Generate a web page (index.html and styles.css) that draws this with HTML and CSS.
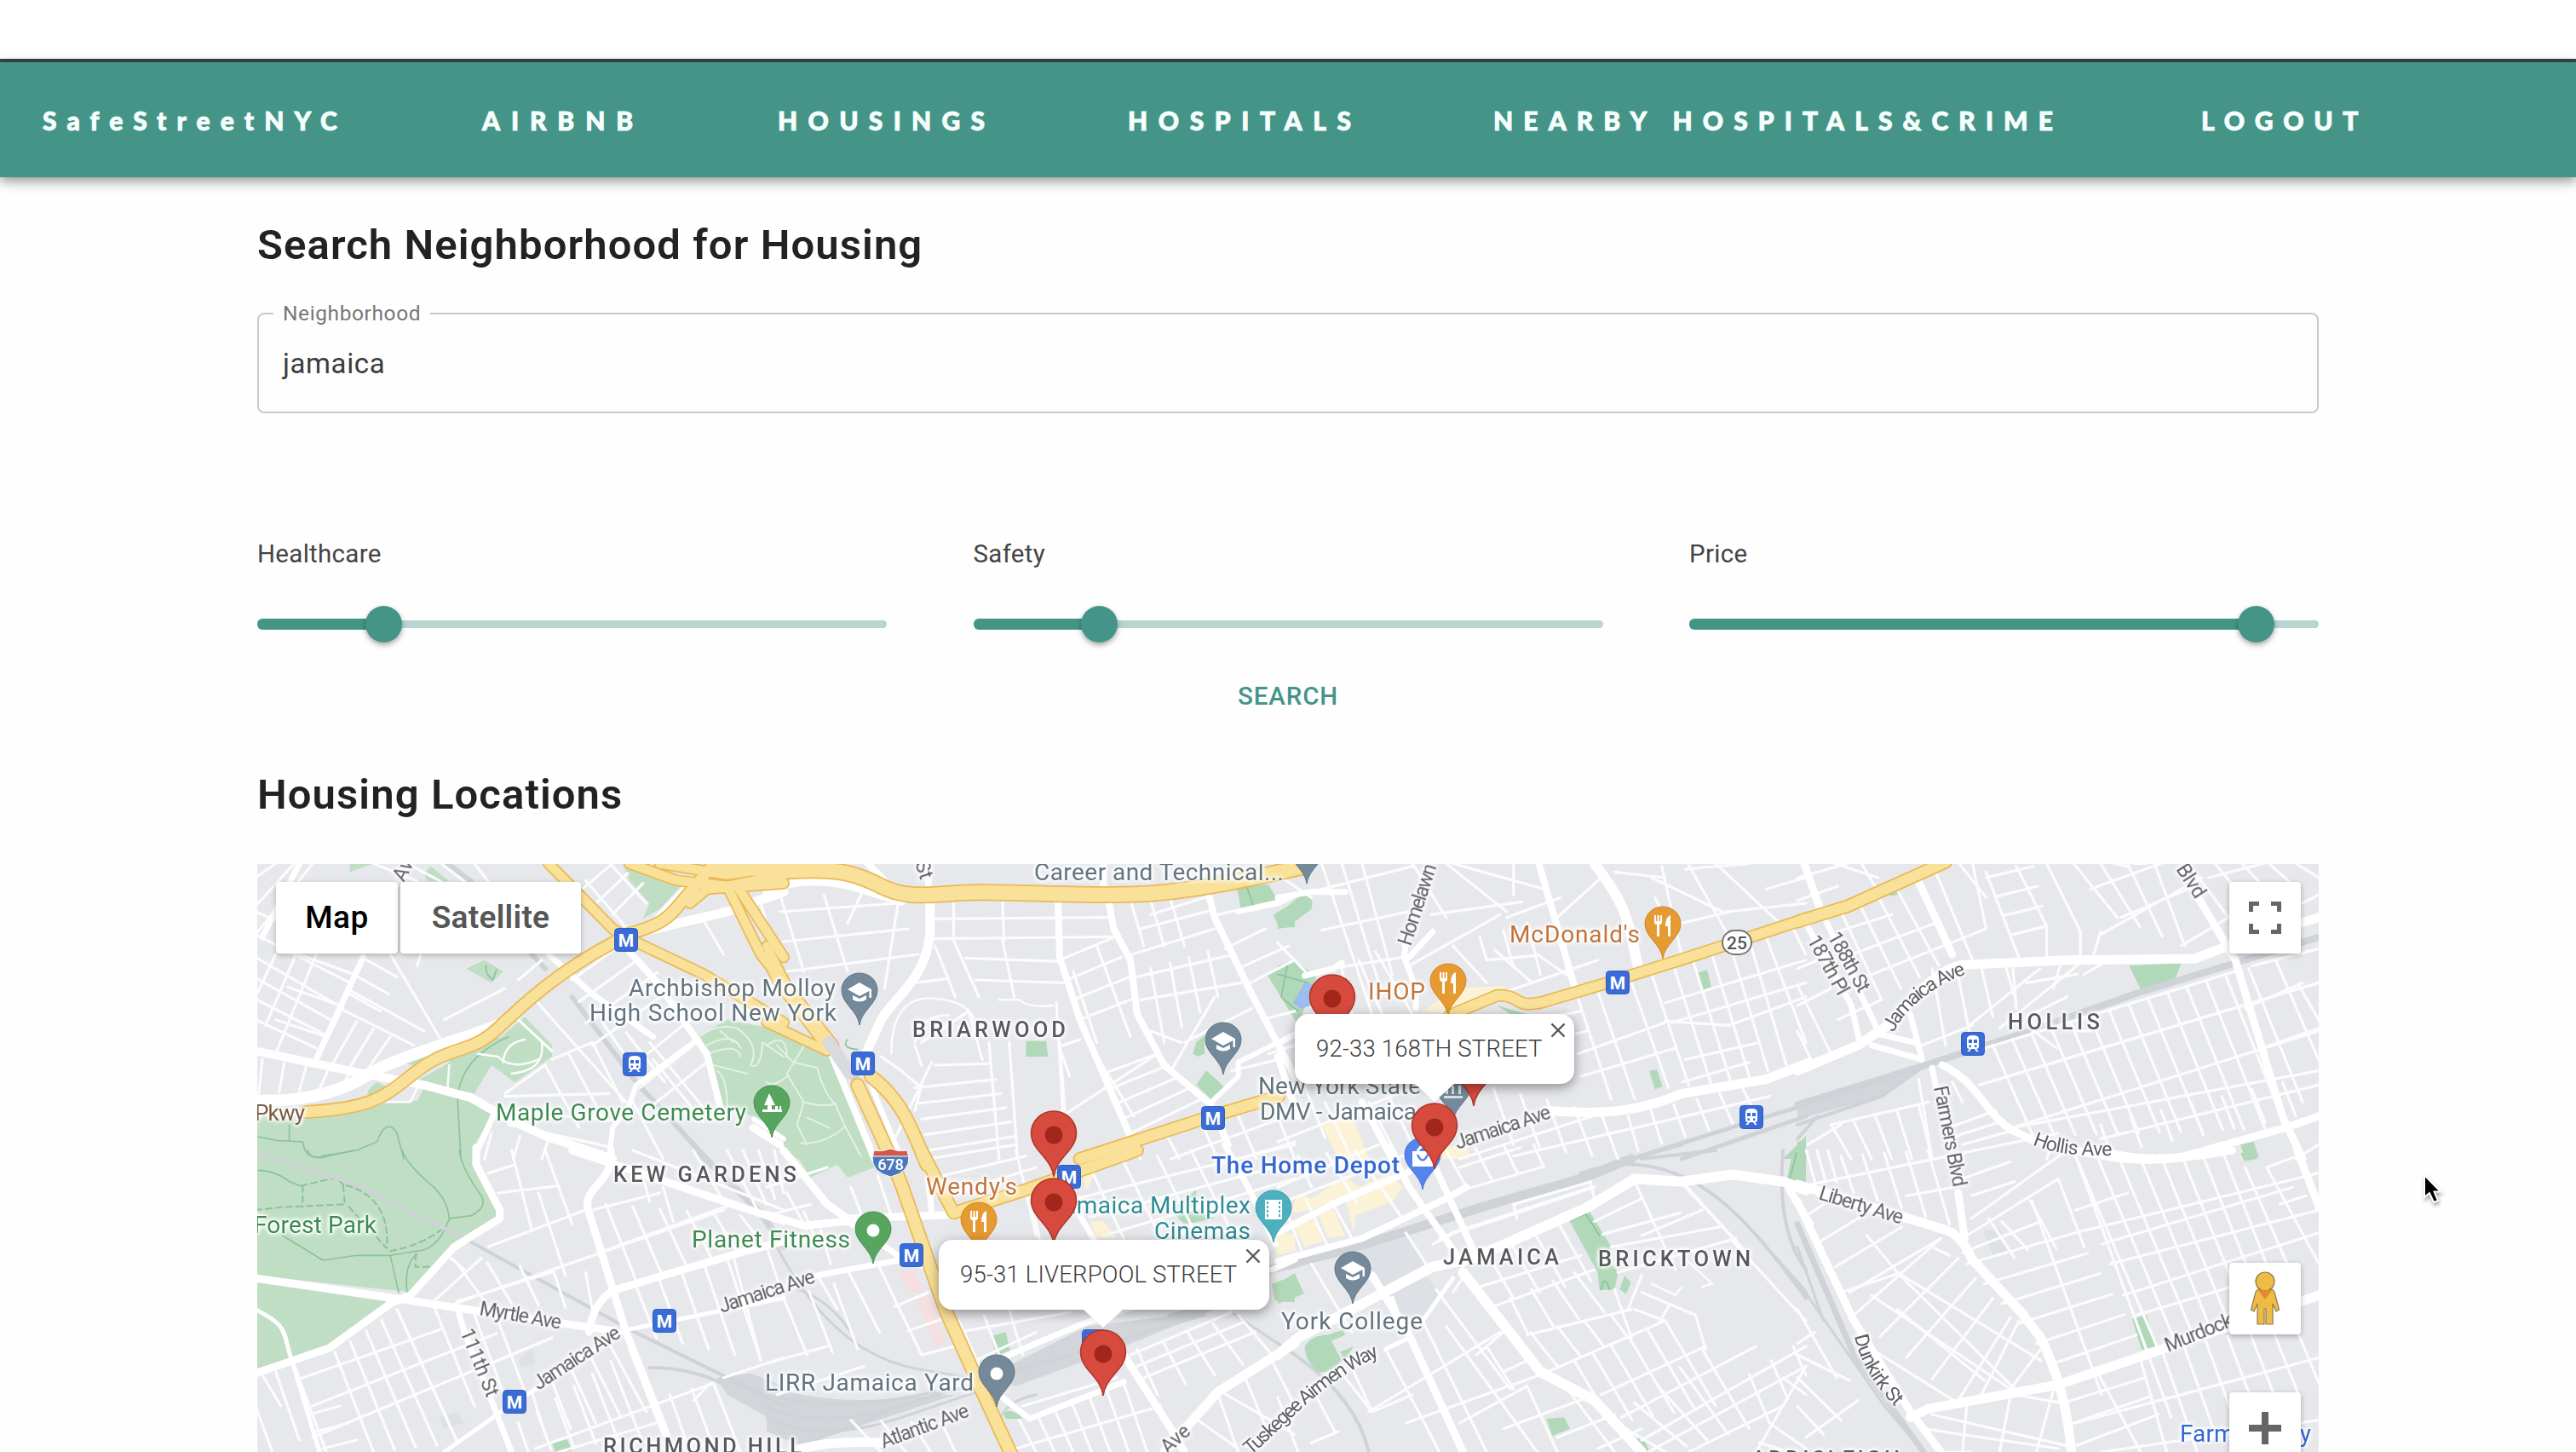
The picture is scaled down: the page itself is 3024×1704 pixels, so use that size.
FILE: index.html
```html
<!DOCTYPE html>
<html lang="en">
<head>
<meta charset="utf-8">
<title>SafeStreetNYC</title>
<link rel="stylesheet" href="styles.css">
</head>
<body>
<div class="topstrip"></div>
<nav class="navbar">
  <a class="brand">SafeStreetNYC</a>
  <a class="n-air">AIRBNB</a>
  <a class="n-hou">HOUSINGS</a>
  <a class="n-hos">HOSPITALS</a>
  <a class="n-near">NEARBY HOSPITALS&amp;CRIME</a>
  <a class="n-out">LOGOUT</a>
</nav>
<main class="container">
  <h2 class="title">Search Neighborhood for Housing</h2>
  <fieldset class="field">
    <legend>Neighborhood</legend>
    <div class="value">jamaica</div>
  </fieldset>
  <div class="sliders">
    <div class="slider"><label>Healthcare</label><div class="rail"><div class="fill" style="width:20%"></div><div class="thumb" style="left:20%"></div></div></div>
    <div class="slider"><label>Safety</label><div class="rail"><div class="fill" style="width:20%"></div><div class="thumb" style="left:20%"></div></div></div>
    <div class="slider"><label>Price</label><div class="rail"><div class="fill" style="width:90%"></div><div class="thumb" style="left:90%"></div></div></div>
  </div>
  <div class="actions"><button class="search">SEARCH</button></div>
  <h2 class="title locations">Housing Locations</h2>
  <section class="map">
    <svg class="canvas" viewBox="302 1014 2420 690" width="2420" height="690">
      <defs>
        <path id="drop" d="M0 61C-2 44-21 36-21 20A21 20 0 0 1 21 20C21 36 2 44 0 61Z"/>
        <g id="red"><path d="M0 77C-3 54-26.500 46-26.500 26A26.500 26 0 0 1 26.500 26C26.500 46 3 54 0 77Z" fill="#d64b3d" stroke="#b0352b" stroke-width="1.500"/><circle cy="28" r="10.500" fill="#a3261c"/></g>
        <g id="edu"><use href="#drop" fill="#74899a" stroke="#5f7485"/><path d="M-14 19L0 11L14 19V29H11.500V21L0 27ZM-8 26L0 30L8 26V31Q0 36-8 31Z" fill="#fff"/></g>
        <g id="food"><use href="#drop" fill="#e69a32" stroke="#d08622"/><path d="M-10 10V18Q-10 21-7 21V35H-4V21Q-1 21-1 18V10H-3V17H-4.500V10H-6.500V17H-8V10ZM9 10Q3 12 3 23H6V35H9Z" fill="#fff"/></g>
        <g id="dotg"><use href="#drop" fill="#57a55e" stroke="#45924d"/><circle cy="22" r="7.500" fill="#fff"/></g>
        <g id="dots"><use href="#drop" fill="#74899a" stroke="#5f7485"/><circle cy="22" r="7.500" fill="#fff"/></g>
        <g id="tree"><use href="#drop" fill="#57a55e" stroke="#45924d"/><path d="M-3 9L4 23H0V28H12V31H-11V28H-5V23H-9ZM4 24h3v4H4ZM9 24h2v4H9Z" fill="#fff"/></g>
        <g id="film"><use href="#drop" fill="#4cb0bf" stroke="#3a9dac"/><path fill="#fff" fill-rule="evenodd" d="M-10 11H10V34H-10ZM-8 13v3h2v-3ZM-8 18v3h2v-3ZM-8 23v3h2v-3ZM-8 28v3h2v-3ZM6 13v3h2v-3ZM6 18v3h2v-3ZM6 23v3h2v-3ZM6 28v3h2v-3Z"/></g>
        <g id="bag"><use href="#drop" fill="#5584ee" stroke="#4473dd"/><path d="M-12 16H12V34H-12Z" fill="#fff"/><path d="M-6 16Q0 5 6 16" fill="none" stroke="#fff" stroke-width="3"/><path d="M-6 20Q0 33 6 20" fill="none" stroke="#5584ee" stroke-width="2.500"/></g>
        <g id="gov"><use href="#drop" fill="#74899a" stroke="#5f7485"/><path d="M-11 32H11V35H-11ZM-9 20h3v10h-3ZM-2 20h3v10h-3ZM6 20h3v10h-3ZM-11 17L0 10L11 17Z" fill="#dce2e6"/></g>
        <g id="m"><rect x="-13.500" y="-13.500" width="27" height="27" rx="4" fill="#3a6bd6" stroke="#2f5fc8"/><text y="8" text-anchor="middle" class="metro">M</text></g>
        <g id="t"><rect x="-13.500" y="-13.500" width="27" height="27" rx="4" fill="#3a6bd6" stroke="#2f5fc8"/><path fill="#fff" fill-rule="evenodd" d="M-7-6Q-7-10 0-10Q7-10 7-6V3Q7 6 4 6L7 9H4L2 6H-2L-4 9H-7L-4 6Q-7 6-7 3ZM-5-5V-1H-1V-5ZM1-5V-1H5V-5ZM-4.500 1.500V4H-2V1.500ZM2 1.500V4H4.500V1.500Z"/></g>
        <path id="tusk" d="M1468 1708C1500 1683 1548 1622 1624 1589"/>
        <path id="jam4" d="M2223 1212C2235 1185 2270 1155 2312 1142"/>
        <path id="hol" d="M2386 1343C2410 1355 2450 1357 2482 1356"/>
        <path id="dun" d="M2177 1568C2184 1600 2200 1625 2226 1652"/>
      </defs>
      <rect x="302" y="1014" width="2420" height="690" fill="#e7e8ec"/>
      <g id="areas"></g><g id="rails"></g><g id="minor"></g><g id="major"></g><g id="hwy"></g>

      <g class="street">
        <text transform="translate(474 1036) rotate(-62)">Av</text>
        <text transform="translate(1074 1013) rotate(72)">St</text>
        <text transform="translate(562 1543) rotate(10)" textLength="97">Myrtle Ave</text>
        <text transform="translate(540 1563) rotate(68)" textLength="84">111th St</text>
        <text transform="translate(632 1632) rotate(-33)" textLength="117">Jamaica Ave</text>
        <text transform="translate(847 1541) rotate(-18)" textLength="117">Jamaica Ave</text>
        <text transform="translate(1037 1700) rotate(-20.500)" textLength="109">Atlantic Ave</text>
        <text transform="translate(1371 1707) rotate(-42)">Ave</text>
        <text><textPath href="#tusk" textLength="192">Tuskegee Airmen Way</textPath></text>
        <text transform="translate(1656 1111) rotate(-72)" textLength="99">Homelawn</text>
        <text transform="translate(1711 1349) rotate(-18.500)" textLength="117">Jamaica Ave</text>
        <text><textPath href="#jam4" textLength="112">Jamaica Ave</textPath></text>
        <text transform="translate(2145 1099) rotate(61)" textLength="77">188th St</text>
        <text transform="translate(2121 1103) rotate(61)" textLength="76">187th Pl</text>
        <text transform="translate(2554 1020) rotate(57)" textLength="43">Blvd</text>
        <text transform="translate(2270 1276) rotate(79)" textLength="120">Farmers Blvd</text>
        <text><textPath href="#hol" textLength="95">Hollis Ave</textPath></text>
        <text transform="translate(2134 1407) rotate(17)" textLength="102">Liberty Ave</text>
        <text><textPath href="#dun" textLength="97">Dunkirk St</textPath></text>
        <text transform="translate(2545 1587) rotate(-22)" textLength="84">Murdock</text>
      </g>
      <g class="poi">
        <g fill="#63737f">
          <text x="738" y="1169" textLength="243">Archbishop Molloy</text>
          <text x="692" y="1198" textLength="290">High School New York</text>
          <text x="898" y="1632" textLength="245">LIRR Jamaica Yard</text>
          <text x="1214" y="1033" textLength="293">Career and Technical...</text>
          <text x="1477" y="1284" textLength="191">New York State</text>
          <text x="1479" y="1314" textLength="184">DMV - Jamaica</text>
          <text x="1504" y="1560" textLength="166">York College</text>
        </g>
        <g fill="#3f8a51">
          <text x="582" y="1315" textLength="294">Maple Grove Cemetery</text>
          <text x="298" y="1447" textLength="144">Forest Park</text>
          <text x="812" y="1464" textLength="186">Planet Fitness</text>
        </g>
        <text x="299" y="1315" textLength="59" fill="#7c5a44" class="pk">Pkwy</text>
        <g fill="#c2733a">
          <text x="1087" y="1402" textLength="107">Wendy's</text>
          <text x="1606" y="1173" textLength="67">IHOP</text>
          <text x="1772" y="1106" textLength="153">McDonald's</text>
        </g>
        <g fill="#2f8b95">
          <text x="1232" y="1424" textLength="236">Jamaica Multiplex</text>
          <text x="1355" y="1454" textLength="113">Cinemas</text>
        </g>
        <g fill="#3467d0">
          <text x="1422" y="1377" textLength="221" class="md">The Home Depot</text>
          <text x="2559" y="1692" textLength="154">Farm Family</text>
        </g>
      </g>
      <g class="hood">
        <text x="1071" y="1217" textLength="180">BRIARWOOD</text>
        <text x="720" y="1387" textLength="215">KEW GARDENS</text>
        <text x="708" y="1706" textLength="233">RICHMOND HILL</text>
        <text x="1694" y="1484" textLength="136">JAMAICA</text>
        <text x="1876" y="1486" textLength="179">BRICKTOWN</text>
        <text x="2357" y="1208" textLength="108">HOLLIS</text>
        <text x="2056" y="1721" textLength="174">ADDISLEIGH</text>
      </g>
      <path d="M1026 1350Q1036 1352 1045 1348Q1055 1352 1065 1350L1067 1359H1024Z" fill="#cf5a4c" stroke="#fff"/>
      <path d="M1024 1357H1067Q1068 1376 1045.500 1381Q1023 1376 1024 1357Z" fill="#4a78bd" stroke="#fff"/>
      <text x="1045.500" y="1373" text-anchor="middle" class="shield">678</text>
      <rect x="2022" y="1092" width="34" height="28" rx="14" fill="#fff" stroke="#777" stroke-width="2"/>
      <text x="2039" y="1114" text-anchor="middle" class="route">25</text>
      <use href="#m" x="735" y="1103"/><use href="#m" x="1013" y="1248"/><use href="#m" x="1424" y="1312"/><use href="#m" x="1255" y="1381"/><use href="#m" x="1070" y="1473"/><use href="#m" x="780" y="1550"/><use href="#m" x="604" y="1645"/><use href="#m" x="1899" y="1153"/><use href="#m" x="1284" y="1574"/>
      <use href="#t" x="745" y="1249"/><use href="#t" x="2056" y="1311"/><use href="#t" x="2316" y="1225"/>
      <use href="#edu" x="1009" y="1142"/><use href="#edu" x="1436" y="1200"/><use href="#edu" x="1588" y="1469"/><use href="#edu" x="1534" y="976"/>
      <use href="#dots" x="1170" y="1590"/><use href="#dotg" x="1025" y="1422"/><use href="#tree" x="906" y="1274"/>
      <use href="#food" x="1149" y="1411"/><use href="#food" x="1700" y="1131"/><use href="#food" x="1952" y="1064"/>
      <use href="#film" x="1495" y="1397"/><use href="#bag" x="1670" y="1335"/><use href="#gov" x="1706" y="1254"/>
      <use href="#red" x="1237" y="1304"/><use href="#red" x="1237" y="1383"/><use href="#red" x="1564" y="1144"/><use href="#red" x="1730" y="1221"/><use href="#red" x="1684" y="1295"/><use href="#red" x="1295" y="1561"/>
    </svg>
    <div class="maptype"><span class="on">Map</span><span class="off">Satellite</span></div>
    <div class="ctl full"><svg width="38" height="38" viewBox="0 0 38 38"><path d="M2.500 12V2.500H12M26 2.500H35.500V12M35.500 26V35.500H26M12 35.500H2.500V26" fill="none" stroke="#666" stroke-width="5"/></svg></div>
    <div class="ctl peg"><svg width="36" height="64" viewBox="0 0 36 64"><g fill="#f0bb45" stroke="#8b7a4a" stroke-width="1.200"><path d="M10 21H26Q29 22 30 28L34.500 45L31 47L27 38V62H19V44H17V62H9V38L5 47L1.500 45L6 28Q7 22 10 21Z"/><circle cx="18" cy="12" r="11"/></g><path d="M10 22H26L18 33Z" fill="#e08a33"/></svg></div>
    <div class="ctl plus"><svg width="38" height="38" viewBox="0 0 38 38"><path d="M19 0V38M0 19H38" stroke="#666" stroke-width="8"/></svg></div>
    <div class="info i-one">92-33 168TH STREET<svg class="close" width="18" height="18"><path d="M1.500 1.500L16.500 16.500M16.500 1.500L1.500 16.500" stroke="#555" stroke-width="2.400"/></svg></div>
    <div class="info i-two">95-31 LIVERPOOL STREET<svg class="close" width="18" height="18"><path d="M1.500 1.500L16.500 16.500M16.500 1.500L1.500 16.500" stroke="#555" stroke-width="2.400"/></svg></div>
  </section>
</main>
<svg class="cursor" width="24" height="38" viewBox="0 0 24 38"><path d="M2 2V28L8 23L13 34L18 32L13.500 21.500H21Z" fill="#000" stroke="#fff" stroke-width="2"/></svg>
<script src="map.js"></script>
</body>
</html>
```
FILE: styles.css
```css
* { box-sizing: border-box; }
body { margin: 0; width: 3024px; height: 1704px; overflow: hidden; position: relative; background: #fefefe; font-family: Roboto, "Liberation Sans", sans-serif; color: #222; }
.topstrip { height: 73px; background: #fff; border-bottom: 4px solid #3a4347; }
.navbar { height: 135px; background: #449588; display: grid; grid-template-columns: 516px 347px 411px 429px 831px 1fr; padding-left: 50px; align-items: center; box-shadow: 0 4px 14px rgba(0,0,0,.45); position: relative; }
.navbar a { font-family: Lato, "Liberation Sans", sans-serif; font-weight: 900; font-size: 30px; line-height: 40px; color: #f6fffc; white-space: nowrap; -webkit-text-stroke: .9px #f6fffc; padding-top: 1px; }
.brand { letter-spacing: 12.1px; }
.n-air { letter-spacing: 12.9px; }
.n-hou { letter-spacing: 12.3px; }
.n-hos { letter-spacing: 12.6px; }
.n-near { letter-spacing: 12.1px; }
.n-out { letter-spacing: 11.7px; }
.container { width: 2420px; margin-left: 302px; display: flex; flex-direction: column; }
.title { margin: 48px 0 0; font-size: 49px; line-height: 64px; font-weight: 600; letter-spacing: 1.1px; color: #222; white-space: nowrap; }
.field { margin: 33px 0 0; padding: 0 28px; height: 132px; border: 2px solid #c9c9c9; border-radius: 8px; min-width: 0; }
.field legend { margin-left: -11px; padding: 0 11px; font-size: 24.500px; line-height: 30px; color: #777; letter-spacing: .6px; }
.value { font-size: 33px; line-height: 40px; margin-top: 24px; letter-spacing: .6px; color: #3c3c3c; }
.sliders { display: grid; grid-template-columns: repeat(3, 739px); justify-content: space-between; margin-top: 145px; }
.slider { display: flex; flex-direction: column; gap: 58px; }
.slider label { font-size: 29.500px; line-height: 40px; letter-spacing: .3px; color: #444; }
.rail { position: relative; height: 9px; border-radius: 5px; background: #b9d5d1; }
.fill { position: absolute; left: 0; top: -2px; height: 13px; border-radius: 6px; background: #449588; }
.thumb { position: absolute; top: -17px; width: 43px; height: 43px; margin-left: -21px; border-radius: 50%; background: #449588; box-shadow: 0 3px 6px rgba(0,0,0,.35); }
.actions { display: flex; justify-content: center; margin-top: 58px; }
.search { border: 0; background: none; padding: 0; font: 500 29.500px/44px Roboto, sans-serif; letter-spacing: .9px; color: #449588; }
.locations { margin-top: 62px; }
.map { position: relative; height: 690px; margin-top: 49px; overflow: hidden; }
.canvas { display: block; }
.street text { font-size: 23px; fill: #5d5f63; filter: drop-shadow(0 0 1.500px #fff) drop-shadow(0 0 2px #fff) drop-shadow(0 0 2px #fff); }
.poi text { font-size: 28px; filter: drop-shadow(0 0 1.500px #fff) drop-shadow(0 0 2px #fff) drop-shadow(0 0 2px #fff); }
.poi .md { font-weight: 500; }
.poi .pk { font-size: 26px; }
.hood text { font-size: 25.500px; font-weight: 500; fill: #58595d; filter: drop-shadow(0 0 1.500px #fff) drop-shadow(0 0 2px #fff) drop-shadow(0 0 2px #fff); }
.metro { font: 700 21px Roboto, sans-serif; fill: #fff; }
.shield { font: 500 18px Roboto, sans-serif; fill: #fff; }
.route { font: 500 21px Roboto, sans-serif; fill: #555; }
.lines path { fill: none; vector-effect: non-scaling-stroke; stroke-linejoin: round; stroke-linecap: round; }
.maptype { position: absolute; left: 22px; top: 21px; display: flex; gap: 3px; font-size: 37px; line-height: 84px; font-weight: 500; text-align: center; }
.maptype span { background: #fff; box-shadow: 0 2px 6px rgba(0,0,0,.25); border-radius: 4px; }
.maptype .on { width: 143px; color: #000; letter-spacing: .5px; }
.maptype .off { width: 212px; color: #565656; font-weight: 600; letter-spacing: .3px; }
.ctl { position: absolute; left: 2315px; width: 84px; height: 84px; background: #fff; border-radius: 4px; box-shadow: 0 2px 6px rgba(0,0,0,.3); display: flex; align-items: center; justify-content: center; }
.full { top: 21px; }
.peg { top: 468px; }
.plus { top: 620px; }
.info { position: absolute; height: 82px; background: #fff; border-radius: 16px; padding-left: 25px; font-size: 27.500px; line-height: 82px; font-weight: 300; letter-spacing: .2px; color: #3c3c3c; white-space: nowrap; box-shadow: 0 4px 14px rgba(0,0,0,.4); }
.info::after { content: ""; position: absolute; top: 81px; border: 24px solid transparent; border-top: 22px solid #fff; border-bottom: 0; }
.i-one { left: 1218px; top: 176px; width: 328px; }
.i-one::after { left: 140px; }
.i-two { left: 800px; top: 441px; width: 388px; }
.i-two::after { left: 169px; }
.close { position: absolute; right: 10px; top: 10px; }
.cursor { position: absolute; left: 2844px; top: 1377px; filter: drop-shadow(1px 3px 2px rgba(0,0,0,.35)); }
```
FILE: map.js
```js
// Each sheet of the map has its own local grid; the matrix places it on the canvas.
const sheets = {
  A: [300, 1010, .39541], B: [300, 1350, .39541],
  C: [900, 1010, .39541], D: [900, 1350, .39541],
  E: [1500, 1010, .39541], F: [1500, 1350, .39541],
  G: [2110, 1010, .39541], H: [2110, 1350, .5102]
};
const NS = 'http://www.w3.org/2000/svg';
const layer = id => { const g = document.getElementById(id); g.setAttribute('class', 'lines'); return g; };
function draw(id, sheet, d, attrs) {
  const [x, y, s] = sheets[sheet];
  const p = document.createElementNS(NS, 'path');
  p.setAttribute('d', d);
  p.setAttribute('transform', `translate(${x} ${y}) scale(${s} .33333)`);
  for (const k in attrs) k === 'fill' ? p.style.fill = attrs[k] : p.setAttribute(k, attrs[k]);
  layer(id).appendChild(p);
}

const PARK = '#bfdec4', GREEN = '#b1d8b8', SHOP = '#fcf3d6', GREY = '#d2d5d9', FIELD = '#dde0e4';
const areas = [
  ['A', PARK, 'M0 890L160 900Q300 890 400 850L480 845L500 800L640 840L705 890L650 1000V1050H0Z'],
  ['A', PARK, 'M370 860Q300 830 360 780L400 800ZM480 775L570 715L600 670L730 620L800 550L880 650V690L770 780L700 720L650 820ZM430 710L520 680L600 665L500 730Z'],
  ['A', PARK, 'M280 10H350L280 40ZM500 45L520 20L575 73H510ZM625 380L680 350L735 390L700 430ZM1090 10L1200 30L1270 80L1200 170L1150 205L1170 150L1110 70Z'],
  ['A', PARK, 'M1310 620L1400 560L1568 600V960L1480 900L1390 870L1350 700Z'],
  ['B', PARK, 'M0 0H650L715 210V240L600 320L470 500L0 440ZM0 465L400 535L220 695L0 770Z'],
  ['B', GREEN, 'M880 1030L925 1018L940 1060H890Z'], ['B', FIELD, 'M545 940L600 920L620 960L560 980ZM780 740L820 700L830 750L790 765Z'],
  ['B', GREY, 'M1370 800L1470 785L1568 830V970L1400 860Z'],
  ['C', PARK, 'M0 590L180 670L310 1050H90L0 960Z'],
  ['C', GREEN, 'M770 635H830L835 690H770ZM1275 640L1300 615V680L1280 690L1265 680ZM1275 790L1305 738L1362 800L1325 845ZM1395 90L1490 85L1520 145L1408 170ZM1485 400L1560 355L1568 560ZM1505 190L1568 145V235H1520Z'],
  ['D', PARK, 'M80 0H300L320 60L240 95L210 50L130 95Z'],
  ['D', GREEN, 'M665 655L710 640L722 705L682 722ZM700 920Q740 910 760 945H710ZM1500 470L1568 440V535L1510 530ZM1200 210L1275 140V200L1330 240L1240 260Z'],
  ['D', '#f6dfe0', 'M385 420L440 425L470 500L425 500ZM440 520L485 510L535 680L505 695Z'],
  ['D', GREY, 'M650 800L950 620L1320 565L1040 700L740 830ZM0 830Q200 900 400 870L560 860L100 1040L0 990Z'],
  ['D', SHOP, 'M960 250H1000L1040 310H980ZM930 70L1000 20L950 140ZM1500 310L1568 290V350L1515 370Z'],
  ['E', GREEN, 'M0 190L70 120Q110 120 100 170L30 235L0 240ZM0 370L50 355L115 405L60 580L0 450ZM650 510L740 540L690 540ZM1245 395L1275 385L1287 445L1258 458ZM1103 740L1125 735L1142 795L1120 805ZM1500 1050L1568 970V1050Z'],
  ['E', '#9dbcf0', 'M45 500L80 430L115 440V500L70 522Z'], ['E', SHOP, 'M430 530L530 450L680 440L540 540ZM130 930L220 890L270 1050H180ZM480 1010L560 1000L570 1050H490Z'],
  ['F', SHOP, 'M40 220L60 150L100 170L200 90L240 130L330 80L370 130L340 180L230 230L225 290L200 160L100 210ZM50 270L110 240L135 320L80 340ZM120 230L165 205L200 300L150 310ZM0 300L30 290L55 350L0 370ZM220 210L310 130L320 180Z'],
  ['F', GREEN, 'M860 235L920 205L990 340L975 380L1010 430L1000 490L955 492L950 430ZM1015 490L1030 440L1048 465L1035 505ZM0 470L50 432L78 505L0 540ZM335 525L355 512L378 540L345 558ZM80 690Q100 650 150 650L190 740Q150 790 120 780Q80 740 80 690ZM150 650L195 630L200 650L160 670ZM185 710L225 690L200 740ZM798 945L850 940L868 980L815 1005ZM1065 1015L1085 1010L1105 1062H1090ZM1510 110L1530 0H1568V115Z'],
  ['F', FIELD, 'M240 350L380 300L440 400L310 480ZM330 510L440 440L480 500L430 590L370 590Z'],
  ['G', GREEN, 'M985 370L1140 360L1120 420L1020 455ZM265 100L290 95L300 120L275 125ZM1315 1000L1355 990L1370 1045L1330 1050ZM0 990L20 985L35 1050H0Z'],
  ['G', GREY, 'M0 860L380 720L250 830L0 910Z'],
  ['H', GREEN, 'M770 595L803 580L825 690L792 702ZM1020 10L1045 0L1058 30L1028 38ZM0 0H8L18 110L0 115Z'], ['H', FIELD, 'M428 285L463 270L483 350L450 370Z']
];
areas.forEach(([s, c, d]) => draw('areas', s, d, { fill: c }));

// Park paths
[['A', 'M0 970L60 985L140 990Q150 1060 200 1040L300 1020L360 990Q390 900 420 960L440 1050M750 620Q600 700 600 850L610 1050M100 930V985M685 370Q680 400 705 420L715 385'],
 ['B', 'M0 70Q60 70 100 110L135 125M435 0Q450 50 520 120Q570 170 575 240L640 230Q690 200 670 160Q610 60 605 0M575 240Q550 330 500 350L400 370L300 370L200 387Q150 350 80 300M400 370L425 500M480 365Q440 400 450 500M155 0Q160 30 200 25L290 0'],
 ['C', 'M1425 90L1445 160M240 630Q220 660 270 665'], ['E', 'M0 400L90 430M30 360L10 480L60 530'], ['F', 'M870 245L915 225L955 300M1520 100L1540 10M960 490Q970 430 985 490']
].forEach(([s, d]) => draw('areas', s, d, { stroke: '#8cc19a', 'stroke-width': 1.6 }));
draw('areas', 'B', 'M0 210L80 200L265 190L260 120Q400 160 390 345L270 190M135 125L240 95L260 120M140 125V200M400 355Q500 330 550 280M475 365V410H520', { stroke: '#8cc19a', 'stroke-width': 2, 'stroke-dasharray': '7 5' });

// Railways
[['A', 6, 'M940 480L1130 780L1340 1050M820 330L860 380M570 10L640 73'],
 ['B', 4, 'M0 10L300 120L620 310L1110 630L1400 800L1568 900M1170 765Q1300 765 1400 830'], ['B', 8, 'M1310 0L1500 220L1568 340'],
 ['C', 12, 'M170 620L260 760'],
 ['D', 3, 'M30 340Q200 720 450 770T640 800M90 490Q180 520 250 640M0 900Q150 990 400 900L900 720L1300 580M0 940Q150 1040 400 940L700 820M0 860Q200 930 500 850M1380 570L1568 720M100 1040L560 830M700 930Q720 880 800 860'],
 ['D', 10, 'M1200 590L1400 520M1490 420L1568 400'],
 ['E', 5, 'M1050 1050L1400 920L1568 860M1200 1050L1568 900'],
 ['F', 11, 'M0 410C300 330 500 230 750 150S950 70 1050 30'],
 ['F', 4, 'M900 80L1200 -20M1000 50C1250 30 1400 250 1568 520M0 680Q230 850 270 1062M1500 0Q1480 280 1568 420M1080 30L1300 0M1480 380L1568 500'],
 ['G', 8, 'M0 860L380 720L690 600L1000 470L1547 270'], ['G', 4, 'M0 930L250 830L380 720M0 980L60 900'],
 ['H', 7, 'M0 260L130 720L290 1062'], ['H', 3, 'M0 460L200 900L290 1062M0 340L60 600']
].forEach(([s, w, d]) => draw('rails', s, d, { stroke: '#cfd2d6', 'stroke-width': w }));

// Blocks of parallel side streets: first street, last street, count
const blocks = [
  ['A', 0, 60, 60, 10, 0, 260, 170, 10, 3], ['A', 0, 340, 260, 520, 0, 560, 180, 660, 4], ['A', 60, 330, 0, 480, 180, 330, 60, 680, 3],
  ['A', 0, 180, 60, 210, 0, 260, 280, 430, 2], ['A', 130, 330, 290, 400, 60, 560, 210, 620, 3],
  ['A', 250, 540, 180, 700, 400, 620, 330, 740, 4], ['A', 270, 450, 500, 600, 250, 520, 470, 650, 2], ['A', 330, 350, 420, 410, 280, 470, 370, 530, 3],
  ['A', 400, 330, 550, 630, 490, 330, 480, 370, 2], ['A', 740, 450, 560, 560, 850, 350, 780, 420, 2],
  ['A', 780, 560, 880, 670, 830, 490, 1100, 850, 2], ['A', 880, 700, 1000, 640, 740, 820, 860, 720, 2], ['A', 860, 720, 960, 940, 1000, 640, 1090, 850, 3],
  ['A', 740, 830, 1050, 820, 750, 930, 1060, 1010, 3], ['A', 940, 420, 1080, 300, 1000, 650, 1250, 440, 4], ['A', 1100, 740, 1290, 560, 1180, 860, 1350, 700, 3],
  ['A', 1030, 570, 1100, 690, 1170, 640, 1330, 870, 3], ['A', 1180, 700, 1330, 920, 1120, 850, 1210, 1050, 2], ['A', 20, 700, 10, 820, 280, 750, 250, 800, 5],
  ['A', 980, 70, 1110, 250, 1060, 20, 1160, 150, 2], ['A', 970, 100, 1060, 10, 1060, 190, 1150, 80, 3], ['A', 1500, 150, 1568, 420, 1320, 190, 1390, 330, 2],
  ['A', 350, 10, 480, 73, 650, 10, 690, 73, 4], ['A', 700, 960, 680, 1050, 870, 980, 850, 1050, 3],
  ['B', 20, 790, 75, 900, 110, 740, 210, 1062, 2], ['B', 235, 710, 350, 1062, 420, 560, 600, 1030, 5], ['B', 420, 560, 600, 1030, 530, 550, 650, 900, 2],
  ['B', 130, 805, 550, 630, 170, 1010, 880, 660, 3], ['B', 650, 580, 750, 900, 720, 600, 800, 850, 2], ['B', 600, 530, 880, 430, 700, 750, 880, 660, 2],
  ['B', 590, 385, 680, 530, 980, 430, 1000, 560, 5], ['B', 590, 540, 1390, 210, 690, 340, 980, 210, 2], ['B', 670, 380, 530, 530, 580, 380, 620, 420, 2],
  ['B', 690, 80, 770, 50, 720, 150, 900, 125, 2], ['B', 760, 0, 820, 280, 860, 0, 940, 260, 2], ['B', 840, 150, 920, 440, 1000, 560, 1000, 600, 2],
  ['B', 1040, 190, 1130, 460, 1440, 230, 1500, 320, 6], ['B', 1020, 360, 1390, 200, 1000, 210, 1200, 150, 2], ['B', 1210, 130, 1240, 250, 1140, 50, 1170, 180, 2],
  ['B', 1130, 480, 1190, 660, 1400, 380, 1500, 740, 5], ['B', 1420, 380, 1500, 740, 1520, 350, 1568, 520, 2], ['B', 1390, 800, 1568, 730, 1300, 880, 1350, 820, 2],
  ['B', 780, 960, 810, 1062, 1110, 700, 1210, 1000, 7], ['B', 820, 850, 860, 1000, 1050, 680, 1160, 920, 5], ['B', 830, 1050, 1360, 820, 900, 1062, 1190, 960, 2],
  ['B', 1230, 860, 1290, 1062, 1360, 820, 1440, 1062, 3], ['B', 0, 900, 50, 1062, 60, 780, 130, 1020, 2], ['B', 160, 930, 250, 900, 200, 1050, 300, 1020, 3],
  ['B', 1400, 0, 1490, 210, 1540, 0, 1568, 150, 4], ['B', 1300, 0, 1400, 200, 1120, 0, 1568, 210, 2],
  ['C', 40, 180, 390, 150, 60, 390, 450, 330, 3], ['C', 40, 120, 110, 390, 170, 120, 240, 390, 2], ['C', 390, 150, 350, 450, 280, 120, 240, 220, 2],
  ['C', 500, 205, 1020, 200, 500, 275, 1030, 268, 2], ['C', 555, 145, 555, 280, 700, 145, 705, 280, 2], ['C', 590, 343, 870, 355, 620, 420, 880, 430, 2],
  ['C', 555, 280, 630, 480, 700, 280, 735, 480, 2], ['C', 500, 300, 560, 480, 600, 530, 640, 700, 2], ['C', 440, 430, 540, 415, 460, 640, 600, 530, 2],
  ['C', 880, 345, 1030, 270, 930, 560, 1100, 480, 4], ['C', 980, 300, 1080, 620, 910, 390, 980, 640, 2], ['C', 1085, 330, 1330, 240, 1110, 490, 1410, 430, 3],
  ['C', 1080, 140, 1120, 300, 1200, 140, 1240, 300, 3], ['C', 1110, 240, 1320, 175, 1140, 190, 1300, 130, 2], ['C', 1140, 380, 1180, 640, 1310, 320, 1340, 480, 4],
  ['C', 1140, 600, 1230, 640, 1330, 480, 1200, 740, 2], ['C', 870, 655, 930, 630, 890, 890, 1160, 680, 2], ['C', 960, 650, 1090, 900, 870, 660, 900, 760, 2],
  ['C', 1000, 750, 1160, 680, 1080, 960, 1290, 840, 5], ['C', 660, 640, 690, 1050, 720, 640, 745, 1050, 2], ['C', 860, 500, 880, 900, 870, 640, 885, 880, 2],
  ['C', 440, 800, 680, 770, 480, 1020, 740, 970, 5], ['C', 460, 790, 440, 880, 490, 710, 380, 980, 2], ['C', 400, 740, 460, 800, 340, 690, 400, 740, 2],
  ['C', 500, 720, 660, 715, 440, 650, 460, 720, 2], ['C', 1340, 190, 1560, 130, 1360, 310, 1480, 240, 2], ['C', 1400, 380, 1550, 300, 1420, 440, 1568, 350, 2],
  ['C', 1470, 560, 1568, 530, 1490, 680, 1568, 650, 2], ['C', 1240, 640, 1440, 520, 1380, 740, 1520, 700, 2], ['C', 1090, 1020, 1110, 1050, 1500, 850, 1568, 1050, 5],
  ['C', 1200, 1050, 1568, 890, 1400, 1050, 1568, 990, 2],
  ['D', 0, 130, 180, 60, 0, 230, 130, 190, 2], ['D', 250, 130, 280, 220, 330, 90, 370, 230, 2], ['D', 480, 30, 740, -20, 560, 150, 800, 60, 3],
  ['D', 740, 0, 800, 300, 780, 150, 810, 310, 2], ['D', 960, 60, 1060, 310, 1360, -20, 1500, 310, 5], ['D', 920, 170, 1568, -20, 1000, 300, 1568, 100, 3],
  ['D', 50, 520, 120, 720, 200, 470, 270, 700, 3], ['D', 150, 440, 210, 560, 330, 400, 460, 720, 3], ['D', 0, 750, 180, 690, 30, 860, 290, 760, 2],
  ['D', 380, 550, 480, 500, 460, 720, 560, 690, 3], ['D', 570, 600, 640, 780, 720, 560, 760, 720, 3], ['D', 570, 640, 900, 570, 620, 740, 800, 640, 2],
  ['D', 750, 950, 800, 1062, 1060, 820, 1130, 1062, 7], ['D', 740, 1050, 1170, 900, 760, 900, 1040, 800, 2], ['D', 1080, 720, 1380, 570, 1120, 800, 1450, 640, 3],
  ['D', 1100, 700, 1160, 860, 1400, 580, 1500, 720, 5], ['D', 1340, 860, 1400, 1062, 1500, 740, 1568, 900, 3], ['D', 1280, 950, 1400, 1050, 1350, 850, 1568, 1000, 2],
  ['D', 60, 150, 120, 280, 160, 280, 190, 400, 3], ['D', 250, 950, 340, 1062, 520, 960, 560, 1062, 4],
  ['E', 130, 10, 280, 540, 250, 10, 340, 400, 3], ['E', 0, 50, 100, 130, 0, 290, 90, 400, 2], ['E', 100, 110, 400, 20, 160, 380, 370, 340, 3],
  ['E', 190, 380, 220, 540, 290, 320, 400, 540, 3], ['E', 400, 10, 500, 200, 500, 10, 680, 180, 2], ['E', 390, 370, 660, 190, 520, 10, 790, 100, 3],
  ['E', 520, 300, 620, 430, 770, 330, 880, 420, 3], ['E', 600, 270, 620, 350, 740, 220, 780, 400, 3], ['E', 680, 200, 840, 130, 700, 10, 700, 120, 2],
  ['E', 620, 350, 760, 335, 680, 460, 950, 350, 2], ['E', 830, 200, 960, 60, 1000, 40, 1150, 60, 2], ['E', 1110, 60, 1320, 180, 1120, 130, 1140, 180, 2],
  ['E', 1140, 20, 1200, 340, 1300, 10, 1490, 220, 3], ['E', 1330, 180, 1568, 150, 1450, 100, 1568, 60, 2], ['E', 1200, 220, 1340, 180, 1210, 30, 1400, 10, 2],
  ['E', 890, 480, 990, 840, 950, 460, 1060, 840, 2], ['E', 1050, 430, 1160, 800, 1110, 400, 1220, 790, 2], ['E', 1170, 350, 1290, 800, 1400, 280, 1510, 720, 5],
  ['E', 1150, 500, 1568, 350, 1170, 570, 1568, 430, 2], ['E', 890, 680, 1150, 570, 900, 760, 1180, 660, 2], ['E', 1150, 565, 1340, 580, 1210, 700, 1430, 640, 2],
  ['E', 1200, 780, 1400, 710, 1340, 580, 1568, 480, 2], ['E', 1450, 270, 1568, 640, 1530, 240, 1568, 330, 2], ['E', 780, 560, 900, 530, 840, 620, 920, 600, 2],
  ['E', 640, 800, 700, 1000, 960, 890, 1010, 1050, 5], ['E', 1040, 900, 1070, 1020, 1380, 800, 1420, 900, 6], ['E', 540, 1050, 960, 890, 700, 1040, 1460, 830, 2],
  ['E', 0, 650, 50, 620, 0, 990, 400, 800, 3], ['E', 0, 680, 60, 900, 140, 850, 220, 1050, 3], ['E', 270, 850, 360, 1050, 330, 830, 420, 1050, 2],
  ['F', 0, 130, 300, -20, 0, 190, 390, 10, 2], ['F', 60, 20, 100, 130, 230, 0, 370, 240, 3], ['F', 10, 170, 70, 350, 160, 180, 220, 310, 3],
  ['F', 500, 0, 560, 130, 760, -20, 790, 60, 4], ['F', 520, 150, 780, 60, 540, 60, 720, -10, 2], ['F', 560, 280, 940, 130, 480, 310, 560, 270, 2],
  ['F', 610, 340, 700, 520, 830, 250, 930, 460, 4], ['F', 600, 480, 900, 370, 640, 550, 940, 420, 2], ['F', 690, 520, 740, 640, 880, 430, 970, 570, 4],
  ['F', 740, 650, 1050, 560, 800, 780, 1150, 600, 2], ['F', 750, 640, 830, 760, 990, 580, 1040, 660, 4], ['F', 1000, 490, 1050, 660, 1080, 440, 1040, 560, 2],
  ['F', 940, 250, 1080, 170, 990, 340, 1310, 270, 3], ['F', 1010, 430, 1360, 310, 1080, 300, 1260, 210, 2], ['F', 1060, 110, 1180, 420, 1210, 130, 1400, 370, 2],
  ['F', 1350, 320, 1568, 600, 1200, 110, 1360, 320, 2], ['F', 1080, 500, 1240, 580, 1060, 560, 1150, 600, 2], ['F', 1240, 580, 1270, 700, 1160, 550, 1130, 610, 2],
  ['F', 880, 740, 990, 960, 1150, 600, 1300, 900, 6], ['F', 990, 950, 1150, 1062, 1260, 700, 1400, 980, 5], ['F', 960, 860, 1270, 690, 1080, 1020, 1568, 690, 3],
  ['F', 1100, 1062, 1568, 760, 1220, 1062, 1500, 900, 2], ['F', 1400, 790, 1460, 960, 1530, 690, 1568, 790, 3], ['F', 1568, 760, 1420, 1062, 1500, 800, 1568, 860, 2],
  ['F', 1460, 960, 1568, 1050, 1430, 1030, 1520, 1062, 2], ['F', 470, 490, 690, 840, 560, 430, 520, 500, 2], ['F', 430, 600, 620, 1062, 500, 620, 770, 1062, 2],
  ['F', 270, 920, 660, 640, 380, 960, 780, 790, 2], ['F', 540, 960, 740, 830, 590, 720, 670, 640, 2], ['F', 620, 690, 700, 840, 690, 650, 740, 740, 2],
  ['F', 670, 780, 740, 740, 670, 980, 920, 870, 2], ['F', 320, 700, 480, 1062, 210, 740, 280, 920, 2], ['F', 740, 830, 830, 1062, 860, 840, 1000, 1062, 2],
  ['F', 0, 870, 60, 1062, 200, 800, 280, 920, 3], ['F', 100, 1030, 180, 990, 280, 920, 400, 860, 2], ['F', 100, 400, 220, 640, 220, 370, 310, 500, 2], ['F', 830, 1010, 1000, 930, 950, 1050, 1080, 980, 2],
  ['F', 700, 190, 710, 240, 930, 120, 940, 170, 2], ['F', 570, 270, 930, 130, 700, 190, 930, 110, 2], ['F', 460, 330, 560, 270, 380, 290, 440, 400, 2],
  ['G', 0, 60, 150, 10, 0, 140, 120, 90, 2], ['G', 110, 10, 240, 60, 190, 10, 240, 110, 2], ['G', 130, 180, 250, 490, 290, 90, 420, 370, 4],
  ['G', 120, 250, 280, 190, 180, 420, 560, 240, 3], ['G', 400, 10, 520, 350, 520, 10, 560, 240, 2], ['G', 0, 380, 60, 350, 0, 510, 100, 450, 2], ['G', 0, 440, 100, 680, 0, 600, 40, 700, 2],
  ['G', 560, 40, 660, 350, 480, 10, 560, 130, 2], ['G', 560, 60, 700, 20, 640, 260, 740, 230, 4], ['G', 650, 20, 740, 230, 740, 10, 840, 250, 2], ['G', 740, 230, 740, 340, 840, 250, 840, 340, 2],
  ['G', 880, 330, 900, 250, 850, 400, 940, 340, 2], ['G', 900, 260, 1200, 60, 1140, 300, 1280, 200, 2], ['G', 820, 10, 950, 200, 1060, 10, 1150, 300, 4], ['G', 870, 100, 1080, 10, 960, 200, 1180, 90, 2],
  ['G', 1160, 10, 1280, 200, 1480, 10, 1547, 60, 5], ['G', 1220, 60, 1547, -40, 1500, 150, 1547, 120, 2], ['G', 400, 380, 440, 650, 620, 380, 650, 500, 4], ['G', 500, 590, 720, 380, 600, 590, 840, 360, 2],
  ['G', 680, 430, 830, 400, 680, 550, 800, 480, 2], ['G', 370, 650, 520, 580, 120, 560, 250, 490, 2], ['G', 530, 670, 1300, 390, 540, 790, 1547, 430, 2], ['G', 540, 790, 1547, 430, 640, 940, 1547, 600, 2],
  ['G', 640, 940, 1547, 740, 900, 980, 1547, 790, 2], ['G', 580, 650, 700, 970, 1270, 400, 1450, 940, 13], ['G', 1340, 380, 1500, 850, 1420, 350, 1547, 700, 2], ['G', 1330, 520, 1500, 430, 1380, 660, 1547, 590, 2],
  ['G', 700, 600, 770, 660, 830, 600, 870, 600, 2], ['G', 100, 930, 160, 1050, 360, 860, 400, 1050, 5], ['G', 30, 1000, 130, 930, 100, 930, 390, 850, 2], ['G', 360, 770, 400, 1050, 460, 780, 490, 850, 2],
  ['G', 450, 940, 590, 880, 490, 1000, 640, 950, 3], ['G', 900, 930, 930, 1030, 1440, 780, 1480, 900, 7], ['G', 940, 10, 980, 20, 1000, 10, 1040, 10, 2], ['G', 640, 380, 650, 520, 780, 370, 760, 450, 2],
  ['G', 1350, 370, 1547, 310, 1490, 440, 1547, 560, 2], ['G', 740, 1050, 760, 990, 1480, 1050, 1547, 1000, 2],
  ['H', 0, 130, 600, -60, 250, 160, 360, 130, 2], ['H', 100, 20, 130, 150, 300, 0, 350, 260, 5], ['H', 20, 0, 40, 110, 70, 0, 90, 110, 3], ['H', 20, 230, 60, 190, 120, 500, 330, 310, 4],
  ['H', 160, 300, 230, 430, 310, 340, 350, 370, 2], ['H', 100, 500, 240, 430, 230, 430, 500, 840, 2], ['H', 230, 430, 560, 740, 170, 510, 490, 840, 2], ['H', 150, 680, 370, 890, 230, 560, 430, 810, 2],
  ['H', 130, 580, 330, 310, 370, 880, 490, 590, 5], ['H', 420, 870, 510, 600, 480, 860, 560, 700, 2], ['H', 390, 400, 640, 290, 590, 750, 780, 650, 6], ['H', 640, 290, 1200, 80, 720, 400, 1200, 210, 2],
  ['H', 750, 510, 1200, 290, 780, 580, 1000, 480, 2], ['H', 470, 250, 530, 350, 600, 100, 660, 340, 3], ['H', 400, 240, 610, 10, 390, 300, 600, 100, 2], ['H', 380, 100, 490, 40, 400, 160, 500, 110, 2],
  ['H', 540, 180, 700, 860, 640, 20, 860, 940, 2], ['H', 640, 20, 830, 700, 980, 10, 1120, 560, 8], ['H', 640, 210, 760, 150, 700, 330, 1140, 130, 2], ['H', 1080, 60, 1200, 400, 1030, 60, 1150, 480, 2],
  ['H', 1080, 60, 1150, 20, 1110, 190, 1170, 160, 2], ['H', 840, 710, 920, 1062, 1140, 600, 1200, 820, 7], ['H', 640, 960, 1200, 730, 700, 1062, 1200, 950, 2], ['H', 690, 780, 790, 1062, 790, 740, 850, 1062, 2],
  ['H', 610, 890, 800, 800, 640, 1040, 830, 930, 3], ['H', 310, 930, 620, 1040, 500, 860, 610, 890, 2], ['H', 290, 980, 600, 1050, 340, 1062, 400, 1062, 2], ['H', 390, 890, 380, 1062, 590, 840, 550, 1062, 3],
  ['H', 0, 560, 90, 800, 0, 680, 40, 640, 2], ['H', 0, 720, 120, 810, 0, 800, 100, 950, 2], ['H', 20, 1010, 140, 880, 0, 900, 60, 1000, 2], ['H', 380, 360, 560, 250, 440, 240, 500, 380, 2]
];
const n0 = v => Math.round(v);
blocks.forEach(([s, a, b, c, d, e, f, g, h, n]) => {
  let p = '';
  for (let i = 0; i < n; i++) {
    const t = i / (n - 1), m = (u, v) => n0(u + (v - u) * t);
    p += `M${m(a, e)} ${m(b, f)}L${m(c, g)} ${m(d, h)}`;
  }
  draw('minor', s, p, { stroke: '#fcfcfd', 'stroke-width': 3.2 });
});
[['C', 'M370 680Q370 480 490 485Q600 490 620 570L610 620M440 640Q460 540 540 545M690 490H750Q780 520 850 510'],
 ['A', 'M660 680L720 690Q760 740 840 700M735 710Q740 640 800 630M760 750Q860 740 850 640M570 800L575 720M390 850H460L480 800'],
 ['F', 'M1180 350L1290 470L1260 480M1110 470L1180 510L1200 480']
].forEach(([s, d]) => draw('minor', s, d, { stroke: '#fcfcfd', 'stroke-width': 2.5 }));
// Cemetery lanes
[['A', 'M1310 630Q1360 570 1430 590Q1500 650 1470 720Q1500 740 1505 640L1568 690M1340 650Q1420 600 1440 660M1345 680Q1430 640 1440 690M1360 720L1460 750M1380 600L1420 640M1400 870Q1400 760 1370 740'],
 ['C', 'M0 650Q60 600 60 690L80 710L150 730Q170 820 205 860L230 930L280 1040M115 645L60 750L110 850L90 930L120 1000M110 850Q170 870 205 855M60 760Q20 800 0 780M120 905L185 940M100 995Q170 1000 230 940M30 650L70 700']
].forEach(([s, d]) => draw('minor', s, d, { stroke: '#e4f1e6', 'stroke-width': 2 }));

// Avenues
[['A', 10, 'M0 670L300 745L500 790L640 835L720 890L860 970L1060 1050'], ['A', 14, 'M0 845C150 850 260 810 340 750S620 630 740 570'], ['A', 7, 'M320 340L180 700M130 10L20 270M870 330L1000 470L1180 620'],
 ['A', 8, 'M1110 320L1200 440L1280 580L1340 680L1380 870'], ['A', 11, 'M1150 250L1400 180L1568 110M1200 200L1280 100'], ['A', 6, 'M1110 860L1130 790L1300 640M1480 910L1568 980M1050 1050L1060 940L1110 860'],
 ['B', 9, 'M655 -10L655 50L725 210V240L590 340L460 510L400 540L220 695L0 785'], ['A', 7, 'M655 1030L705 900'],
 ['B', 9, 'M0 450L440 525L600 555L1060 635M940 0L1568 250M1055 0C1060 120 980 120 985 200L1100 640L1220 1000M990 640C1000 560 1030 510 1070 490L1440 360L1568 320'],
 ['B', 7, 'M600 560L620 640L700 880L760 1062'], ['B', 5, 'M560 1062L730 920L1090 635L1568 520M0 560C100 620 80 640 105 730L190 1062'],
 ['C', 11, 'M485 140V260C470 420 380 480 340 560L290 690'], ['C', 8, 'M865 140L870 340L930 560L1090 1000M1015 140L1030 240L1080 350L1100 540L1180 720L1320 860L1370 1000M1310 110L1330 200L1440 470L1568 760M195 690L320 1050M1000 10V90M480 10V80M300 10L350 70'],
 ['C', 9, 'M0 110Q100 50 250 90L400 145'], ['C', 6, 'M310 790L400 1050M1320 850L1400 760V710L1568 610M1400 180L1520 150L1568 120'],
 ['D', 9, 'M50 0L180 190L240 240L600 225M0 225L110 265L240 250M40 -20L-40 -80'], ['D', 7, 'M150 440L400 385L470 410M240 250L390 370M480 100L490 220'],
 ['D', 11, 'M1180 1062L1340 850L1568 680M100 1050Q200 1020 350 1030'], ['D', 7, 'M700 730L940 610L1130 535M780 945L1060 815M700 870L780 945M1360 -20L1430 130L1510 330M1500 420L1568 385M890 150L990 350'],
 ['D', 9, 'M1060 720L1200 980L1240 1062'],
 ['E', 8, 'M775 10L880 440M0 690L60 900M250 850L340 1050'], ['E', 12, 'M940 10C1030 150 1040 200 1070 380'], ['E', 7, 'M380 290L375 340L410 450V520M80 405L165 380L190 360M390 340L460 250M0 130L100 110L200 110'],
 ['E', 11, 'M800 880C1000 900 1100 870 1200 820L1450 770L1580 710'],
 ['F', 8, 'M0 390L250 310L500 170L560 130M0 290L180 180L400 70M330 -10L390 130L550 400M460 40L510 170L580 350'],
 ['F', 12, 'M0 720L60 660L300 510L460 410L580 380L920 200L1060 100L1200 110L1350 85L1500 110L1568 140M550 430L780 780L940 880L1080 1062'],
 ['F', 9, 'M280 440L390 650L550 1062M1520 140L1580 260'], ['F', 5, 'M320 700L390 660M340 520L370 620M430 600L520 450'],
 ['G', 11, 'M0 740L180 650L280 570C350 480 420 370 500 367L800 350L1180 345L1280 300L1547 200'], ['G', 9, 'M1190 130L1300 350L1440 900L1500 1050M350 50L460 330M20 10L70 180'],
 ['G', 7, 'M20 210L160 510L185 640M80 200L240 600M240 610L350 640M220 650L370 700L335 540M400 730L412 800'], ['G', 9, 'M430 720C540 780 560 900 640 950L700 985M930 1030Q1050 1060 1150 1040L1450 940L1547 900'],
 ['H', 9, 'M0 180L130 600L260 920L330 1062M640 0C780 50 850 40 1000 0M1150 0L1200 200M370 150L385 310'], ['H', 11, 'M0 120L340 280Q380 300 400 380L520 580L560 660Q620 850 630 1062M260 940L300 910L600 825L830 705L1200 510']
].forEach(([s, w, d]) => draw('major', s, d, { stroke: '#fff', 'stroke-width': w }));

// Arterials and parkways, outlined first and filled second
const roads = [
  ['A', 13, 'M150 885C360 870 380 830 480 740S640 680 720 590S900 390 1060 290L1100 260C1230 220 1230 190 1290 110L1340 40'],
  ['A', 11, 'M870 10L1060 240L1100 270L1330 400L1568 570M1400 90L1500 330L1568 430M1430 90L1568 340M1110 10L1250 70L1400 90L1568 50M1200 10L1400 50L1568 20M1290 150L1340 100L1568 80M1330 40L1568 35M1350 20H1568'],
  ['C', 10, 'M0 300L60 440L200 650M0 350L40 440L180 660M0 570L180 670'],
  ['C', 17, 'M0 42C200 20 260 40 340 90S500 115 620 112S1000 130 1150 115S1450 60 1600 20'], ['C', 11, 'M0 70L60 40Q200 10 300 70'],
  ['C', 14, 'M270 790L370 1050M310 760C400 840 430 940 475 1070'],
  ['D', 14, 'M370 30L400 120L530 560L640 850L730 1080'], ['D', 13, 'M460 0L555 220L780 135L1100 0'], ['C', 13, 'M930 1050L1320 900L1520 830'],
  ['E', 12, 'M510 545L650 475C720 470 700 520 780 500L980 430L1220 340L1580 200'], ['G', 13, 'M0 215L150 160L440 5']
];
roads.forEach(([s, w, d]) => draw('hwy', s, d, { stroke: '#e9b956', 'stroke-width': w + 3 }));
roads.forEach(([s, w, d]) => draw('hwy', s, d, { stroke: '#f9e199', 'stroke-width': w - .5 }));
draw('hwy', 'C', 'M185 640L245 745', { stroke: '#d9dadd', 'stroke-width': 15 });
```
